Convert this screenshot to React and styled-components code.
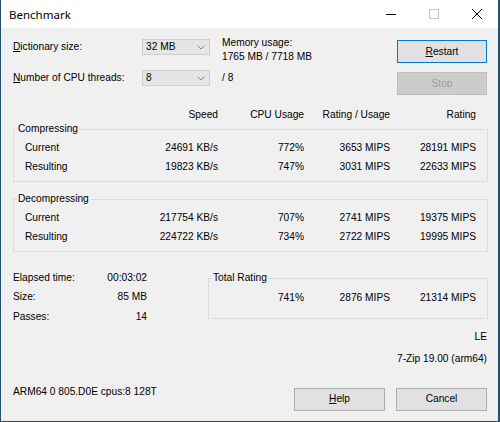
import React from "react";
import styled, { createGlobalStyle } from "styled-components";

const GlobalStyle = createGlobalStyle`
  html, body { margin: 0; padding: 0; background: #24506f; }
  body {
    width: 500px; height: 422px; overflow: hidden;
    font-family: "Liberation Sans", Arial, sans-serif;
    font-size: 10.2px; color: #000;
  }
`;

const Window = styled.div`
  margin-left: 1px;
  width: 497px;
  height: 421px;
  background: #f0f0f0;
  display: flex;
  flex-direction: column;
`;

const TitleBar = styled.div`
  height: 28px;
  background: #fff;
  display: flex;
  align-items: center;
`;

const Title = styled.div`
  flex: 1;
  padding-left: 8px;
  font-family: "Noto Sans", "Open Sans", sans-serif;
  font-size: 11.5px;
  color: #000;
`;

const CaptionButton = styled.div`
  width: 43px;
  height: 28px;
  display: flex;
  align-items: center;
  justify-content: center;
`;

const Body = styled.div`
  flex: 1;
  padding: 11px 10px 0 12px;
  display: flex;
  flex-direction: column;
  line-height: 14px;
`;

const TopSection = styled.div`
  display: flex;
  justify-content: space-between;
  padding-right: 1px;
`;

const Settings = styled.div`
  display: grid;
  grid-template-columns: 129px 68px auto;
  grid-template-rows: 16px 16px;
  row-gap: 15px;
  align-items: center;
`;

const Combo = styled.div`
  box-sizing: border-box;
  height: 16px;
  border: 1px solid #cfcfcf;
  background: #e5e5e5;
  display: flex;
  align-items: center;
  justify-content: space-between;
  padding: 0 4px 0 3px;
`;

const SideText = styled.div`
  margin-left: 12px;
  align-self: ${(p) => (p.$top ? "start" : "center")};
  margin-top: ${(p) => (p.$top ? "-3px" : "0")};
  white-space: nowrap;
`;

const ButtonColumn = styled.div`
  display: flex;
  flex-direction: column;
  gap: 9px;
  margin-top: 1px;
`;

const Button = styled.div`
  box-sizing: border-box;
  width: ${(p) => p.$w || 90}px;
  height: 23px;
  display: flex;
  align-items: center;
  justify-content: center;
  background: ${(p) => (p.$disabled ? "#cccccc" : "#e1e1e1")};
  border: 1px solid
    ${(p) => (p.$default ? "#0078d7" : p.$disabled ? "#bfbfbf" : "#adadad")};
  color: ${(p) => (p.$disabled ? "#9d9d9d" : "#000")};
`;

const TableGrid = styled.div`
  display: grid;
  grid-template-columns: 1fr 100px 86px 86px 86px;
  height: ${(p) => p.$h || 19}px;
  align-items: center;
  & > span + span { text-align: right; }
`;

const HeaderRow = styled(TableGrid)`
  margin-top: 13px;
  padding: 0 12px;
  height: 14px;
`;

const Group = styled.fieldset`
  margin: ${(p) => p.$mt || 0}px 0 0 0;
  padding: 2px 11px 5px 11px;
  border: 1px solid #dcdcdc;
  min-width: 0;
`;

const Legend = styled.legend`
  padding: 0 1px;
  margin-left: ${(p) => (p.$inset ? -8 : 3)}px;
  line-height: 14px;
`;

const BottomSection = styled.div`
  display: flex;
  align-items: flex-start;
  margin-top: 16px;
`;

const Stats = styled.div`
  width: 134px;
  display: grid;
  grid-template-columns: 1fr auto;
  grid-auto-rows: 19.5px;
  align-items: center;
  & > span:nth-child(2n) { text-align: right; }
`;

const TotalGroup = styled.fieldset`
  margin: 3px 0 0 61px;
  padding: 3px 11px 11px 0;
  width: 280px;
  box-sizing: border-box;
  border: 1px solid #dcdcdc;
  min-width: 0;
`;

const TotalGrid = styled.div`
  display: grid;
  grid-template-columns: 95px 86px 86px;
  height: 19px;
  align-items: center;
  text-align: right;
`;

const InfoLines = styled.div`
  margin-top: 3px;
  padding-right: 1px;
  display: flex;
  flex-direction: column;
  align-items: flex-end;
  gap: 8px;
`;

const Footer = styled.div`
  margin-top: 19px;
  padding-right: 1px;
  display: flex;
  align-items: flex-start;
  justify-content: space-between;
`;

const FooterButtons = styled.div`
  display: flex;
  gap: 11px;
  margin-top: 3px;
`;

const Caret = () => (
  <svg width="8" height="5" viewBox="0 0 8 5">
    <polyline points="0.5,0.5 4,4 7.5,0.5" fill="none" stroke="#8a8a8a" strokeWidth="1" />
  </svg>
);

const DataRow = ({ label, values }) => (
  <TableGrid>
    <span>{label}</span>
    {values.map((v, i) => (
      <span key={i}>{v}</span>
    ))}
  </TableGrid>
);

export default function App() {
  return (
    <>
      <GlobalStyle />
      <Window>
        <TitleBar>
          <Title>Benchmark</Title>
          <CaptionButton>
            <svg width="10" height="10" viewBox="0 0 10 10">
              <line x1="0" y1="5.5" x2="10" y2="5.5" stroke="#000" strokeWidth="1" />
            </svg>
          </CaptionButton>
          <CaptionButton>
            <svg width="10" height="10" viewBox="0 0 10 10">
              <rect x="0.5" y="0.5" width="9" height="9" fill="none" stroke="#c4c4c4" strokeWidth="1" />
            </svg>
          </CaptionButton>
          <CaptionButton>
            <svg width="10" height="10" viewBox="0 0 10 10">
              <path d="M0 0 L10 10 M10 0 L0 10" stroke="#000" strokeWidth="1" />
            </svg>
          </CaptionButton>
        </TitleBar>
        <Body>
          <TopSection>
            <Settings>
              <span><u>D</u>ictionary size:</span>
              <Combo><span>32 MB</span><Caret /></Combo>
              <SideText $top>
                Memory usage:
                <br />
                1765 MB / 7718 MB
              </SideText>
              <span><u>N</u>umber of CPU threads:</span>
              <Combo><span>8</span><Caret /></Combo>
              <SideText>/ 8</SideText>
            </Settings>
            <ButtonColumn>
              <Button $default><span><u>R</u>estart</span></Button>
              <Button $disabled>Stop</Button>
            </ButtonColumn>
          </TopSection>

          <HeaderRow>
            <span />
            <span>Speed</span>
            <span>CPU Usage</span>
            <span>Rating / Usage</span>
            <span>Rating</span>
          </HeaderRow>

          <Group>
            <Legend $inset>Compressing</Legend>
            <DataRow label="Current" values={["24691 KB/s", "772%", "3653 MIPS", "28191 MIPS"]} />
            <DataRow label="Resulting" values={["19823 KB/s", "747%", "3031 MIPS", "22633 MIPS"]} />
          </Group>

          <Group $mt={10}>
            <Legend $inset>Decompressing</Legend>
            <DataRow label="Current" values={["217754 KB/s", "707%", "2741 MIPS", "19375 MIPS"]} />
            <DataRow label="Resulting" values={["224722 KB/s", "734%", "2722 MIPS", "19995 MIPS"]} />
          </Group>

          <BottomSection>
            <Stats>
              <span>Elapsed time:</span>
              <span>00:03:02</span>
              <span>Size:</span>
              <span>85 MB</span>
              <span>Passes:</span>
              <span>14</span>
            </Stats>
            <TotalGroup>
              <Legend>Total Rating</Legend>
              <TotalGrid>
                <span>741%</span>
                <span>2876 MIPS</span>
                <span>21314 MIPS</span>
              </TotalGrid>
            </TotalGroup>
          </BottomSection>

          <InfoLines>
            <span>LE</span>
            <span>7-Zip 19.00 (arm64)</span>
          </InfoLines>

          <Footer>
            <span>ARM64 0 805.D0E cpus:8 128T</span>
            <FooterButtons>
              <Button $w={91}><span><u>H</u>elp</span></Button>
              <Button $w={91}>Cancel</Button>
            </FooterButtons>
          </Footer>
        </Body>
      </Window>
    </>
  );
}
